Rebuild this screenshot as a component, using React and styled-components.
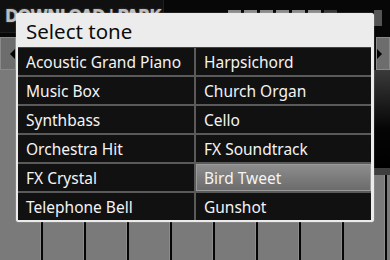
import React from "react";
import styled, { createGlobalStyle } from "styled-components";

const Global = createGlobalStyle`
  html, body { margin: 0; padding: 0; background: #000; }
  body { font-family: "Noto Sans", "Open Sans", sans-serif; }
`;

const tones = [
  "Acoustic Grand Piano",
  "Harpsichord",
  "Music Box",
  "Church Organ",
  "Synthbass",
  "Cello",
  "Orchestra Hit",
  "FX Soundtrack",
  "FX Crystal",
  "Bird Tweet",
  "Telephone Bell",
  "Gunshot",
];

const Screen = styled.div`
  position: relative;
  width: 390px;
  height: 260px;
  overflow: hidden;
  display: flex;
  flex-direction: column;
  background: #7a7a7a;
`;

const Header = styled.div`
  height: 37px;
  display: flex;
  align-items: flex-start;
  background: #070707;
`;

const Watermark = styled.div`
  width: 164px;
  height: 33px;
  box-sizing: border-box;
  padding: 5px 0 0 5px;
  border: 1px solid #1e1e1e;
  border-top: 0;
  border-left: 0;
  background: #101010;
  font-family: "DejaVu Sans Condensed", "DejaVu Sans", sans-serif;
  font-weight: bold;
  font-size: 18px;
  letter-spacing: -1px;
  color: #bdbdbd;
  text-shadow: 0 0 2px #555;
  white-space: nowrap;
  overflow: hidden;
`;

const Dashes = styled.div`
  margin: 10px 0 0 64px;
  display: flex;
  gap: 3px;
`;

const Dash = styled.div`
  width: 13px;
  height: 4px;
  background: ${(p) => (p.$dim ? "#3a3a3a" : "#8a8a8a")};
`;

const SideBlock = styled.div`
  margin: 10px 8px 0 auto;
  width: 8px;
  height: 16px;
  background: #555;
`;

const TabRow = styled.div`
  height: 33px;
  display: flex;
  background: #0a0a0a;
`;

const Tab = styled.div`
  width: ${(p) => p.$w}px;
  display: flex;
  align-items: center;
  justify-content: ${(p) => (p.$right ? "flex-start" : "flex-end")};
  background: #6d6d6d;
  border: 1px solid #8a8a8a;
  box-sizing: border-box;
`;

const Arrow = styled.div`
  width: 0;
  height: 0;
  border-top: 5px solid transparent;
  border-bottom: 5px solid transparent;
  ${(p) =>
    p.$right
      ? "border-left: 5px solid #000;"
      : "border-right: 5px solid #000;"}
`;

const Fill = styled.div`
  flex: 1;
`;

const TrackRow = styled.div`
  height: 105px;
  display: flex;
`;

const LeftPane = styled.div`
  flex: 1;
  background: #7a7a7a;
`;

const RightPane = styled.div`
  width: 120px;
  background: linear-gradient(#3a3a3a, #050505 60%, #000);
  border-bottom: 7px solid #3e3e3e;
  box-sizing: border-box;
`;

const Keys = styled.div`
  flex: 1;
  display: flex;
  gap: 2px;
  background: #050505;
`;

const Key = styled.div`
  width: 41px;
  flex-shrink: 0;
  background: #7a7a7a;
  border-right: 1px solid #8c8c8c;
  box-sizing: border-box;
`;

const Dialog = styled.div`
  position: absolute;
  left: 16px;
  top: 13px;
  width: 358px;
  height: 209px;
  box-sizing: border-box;
  padding: 0 3px 2px 2px;
  display: flex;
  flex-direction: column;
  background: #ececec;
  border-radius: 3px;
  box-shadow: 0 0 1px #fff;
`;

const Title = styled.div`
  height: 35px;
  box-sizing: border-box;
  padding: 4px 0 0 8px;
  font-size: 20.5px;
  color: #0d0d0d;
  border-bottom: 1px solid #444;
`;

const Grid = styled.div`
  flex: 1;
  display: grid;
  grid-template-columns: 176px 1fr;
  grid-auto-rows: 1fr;
  gap: 2px;
  background: #5a5a5a;
`;

const Cell = styled.div`
  display: flex;
  align-items: center;
  padding-left: 8px;
  font-size: 15.5px;
  color: #f4f4f4;
  white-space: nowrap;
  background: ${(p) =>
    p.$active
      ? "linear-gradient(#8e8e8e, #7c7c7c 50%, #6a6a6a)"
      : "#111"};
  ${(p) => p.$active && "box-shadow: inset 0 0 0 1px #9a9a9a;"}
`;

export default function App() {
  return (
    <>
      <Global />
      <Screen>
        <Header>
          <Watermark>DOWNLOAD↓PARK</Watermark>
          <Dashes>
            {[0, 1, 2, 3, 4, 5].map((i) => (
              <Dash key={i} />
            ))}
            <Dash $dim />
          </Dashes>
          <SideBlock />
        </Header>
        <TabRow>
          <Tab $w={16}>
            <Arrow />
          </Tab>
          <Fill />
          <Tab $w={14} $right>
            <Arrow $right />
          </Tab>
        </TabRow>
        <TrackRow>
          <LeftPane />
          <RightPane />
        </TrackRow>
        <Keys>
          {Array.from({ length: 10 }).map((_, i) => (
            <Key key={i} />
          ))}
        </Keys>
        <Dialog>
          <Title>Select tone</Title>
          <Grid>
            {tones.map((t) => (
              <Cell key={t} $active={t === "Bird Tweet"}>
                {t}
              </Cell>
            ))}
          </Grid>
        </Dialog>
      </Screen>
    </>
  );
}
